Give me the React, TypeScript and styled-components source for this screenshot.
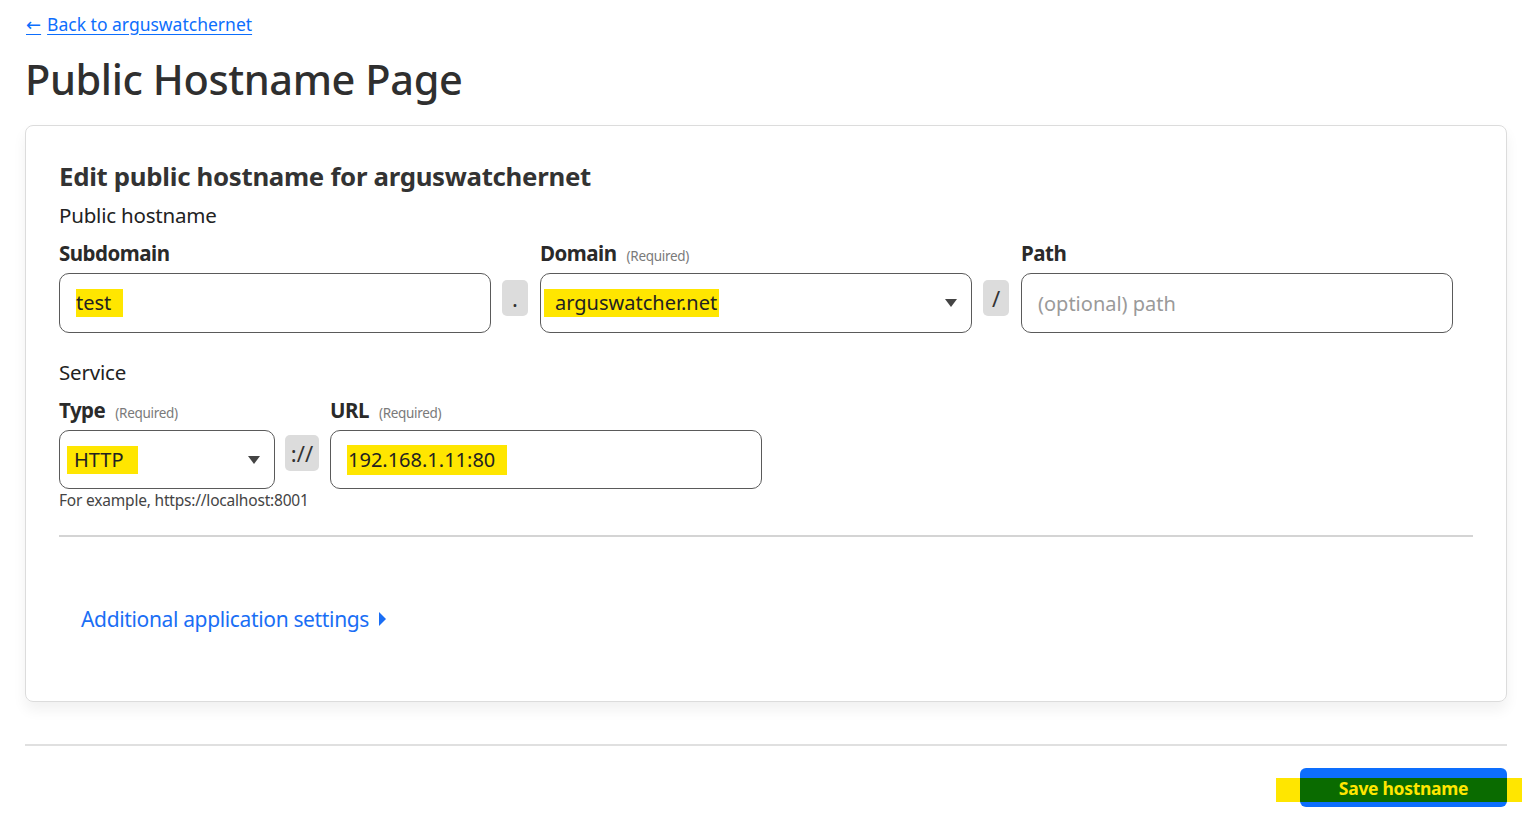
import styled, { createGlobalStyle } from "styled-components";

const GlobalStyle = createGlobalStyle`
  html, body {
    margin: 0;
    background: #ffffff;
  }

  body {
    font-family: "Noto Sans", "Open Sans", "Liberation Sans", sans-serif;
    color: #333333;
  }

  * {
    box-sizing: border-box;
  }
`;

const Page = styled.div`
  padding: 11px 16px 0 25px;
`;

const BackLink = styled.a`
  display: inline-block;
  margin-left: 1px;
  font-size: 17.5px;
  line-height: 26px;
  color: #0d6efd;
  text-decoration: underline;
  text-underline-offset: 3px;
  cursor: pointer;
`;

const Arrow = styled.span`
  font-family: "DejaVu Sans", sans-serif;
  font-size: 18px;
  margin-right: 6px;
`;

const Title = styled.h1`
  margin: 16px 0 21px 0;
  font-size: 41.5px;
  line-height: 50px;
  font-weight: 500;
  color: #2f2f2f;
  letter-spacing: -0.4px;
`;

const Card = styled.section`
  border: 1px solid #dcdcdc;
  border-radius: 8px;
  padding: 32px 33px 0 33px;
  height: 577px;
  box-shadow: 0 8px 14px rgba(0, 0, 0, 0.06);
`;

const CardTitle = styled.h2`
  margin: 0 0 7px 0;
  font-size: 25.8px;
  line-height: 36px;
  font-weight: 700;
  color: #333333;
  letter-spacing: -0.3px;
`;

const SectionLabel = styled.div`
  font-size: 20.5px;
  line-height: 28px;
  color: #222222;
  letter-spacing: -0.2px;
`;

const FieldRow = styled.div`
  display: flex;
  align-items: flex-start;
  margin-top: 10px;
`;

const Field = styled.div<{ $width: number }>`
  display: flex;
  flex-direction: column;
  width: ${(p) => p.$width}px;
`;

const LabelLine = styled.div`
  display: flex;
  align-items: baseline;
  height: 34px;
`;

const Label = styled.span`
  font-size: 20.5px;
  line-height: 28px;
  font-weight: 700;
  color: #2a2a2a;
  letter-spacing: -0.5px;
`;

const Required = styled.span`
  margin-left: 10px;
  font-size: 13.5px;
  color: #7a7a7a;
  letter-spacing: -0.3px;
`;

const InputBox = styled.div<{ $height?: number }>`
  position: relative;
  display: flex;
  align-items: center;
  height: ${(p) => p.$height ?? 60}px;
  border: 1px solid #5a5a5a;
  border-radius: 10px;
  padding: 0 16px;
  font-size: 20px;
  color: #222222;
  background: #ffffff;
`;

const Placeholder = styled.span`
  color: #9a9a9a;
`;

const Highlight = styled.span<{ $pad?: string }>`
  background: #ffe600;
  padding: ${(p) => p.$pad ?? "0 4px"};
  line-height: 28px;
`;

const Caret = styled.span`
  position: absolute;
  right: 14px;
  top: 50%;
  margin-top: -4px;
  width: 0;
  height: 0;
  border-left: 6px solid transparent;
  border-right: 6px solid transparent;
  border-top: 8px solid #444444;
`;

const Separator = styled.div<{ $width: number }>`
  display: flex;
  align-items: center;
  justify-content: center;
  width: ${(p) => p.$width}px;
  height: 36px;
  margin: 41px 12px 0 11px;
  border-radius: 5px;
  background: #dcdcdc;
  font-size: 22px;
  color: #333333;
`;

const Hint = styled.div`
  margin-top: 1px;
  font-size: 15.5px;
  line-height: 20px;
  color: #444444;
  white-space: nowrap;
  letter-spacing: -0.2px;
`;

const ServiceLabel = styled(SectionLabel)`
  margin-top: 25px;
`;

const Divider = styled.hr`
  margin: 25px 0 0 0;
  border: 0;
  border-top: 2px solid #d4d4d4;
`;

const Expander = styled.button`
  display: inline-flex;
  align-items: center;
  gap: 10px;
  margin: 68px 0 0 22px;
  padding: 0;
  border: 0;
  background: none;
  font-family: inherit;
  font-size: 21px;
  color: #1a6ef5;
  cursor: pointer;
  letter-spacing: -0.35px;
`;

const ExpanderCaret = styled.span`
  width: 0;
  height: 0;
  border-top: 7px solid transparent;
  border-bottom: 7px solid transparent;
  border-left: 7px solid #1a6ef5;
`;

const Footer = styled.div`
  margin-top: 42px;
  border-top: 2px solid #e0e0e0;
  display: flex;
  justify-content: flex-end;
  padding-top: 22px;
`;

const SaveWrap = styled.div`
  position: relative;
`;

const SaveBand = styled.span`
  position: absolute;
  left: -24px;
  right: -15px;
  top: 10px;
  height: 24px;
  background: #ffe600;
`;

const SaveButton = styled.button`
  position: relative;
  width: 207px;
  height: 39px;
  border: 0;
  border-radius: 6px;
  background: linear-gradient(
    #0d6efd 0,
    #0d6efd 10px,
    #0a6b00 10px,
    #0a6b00 34px,
    #0d6efd 34px
  );
  color: #ffe600;
  font-family: inherit;
  font-size: 17.5px;
  font-weight: 700;
  letter-spacing: -0.3px;
  cursor: pointer;
`;

export default function App() {
  return (
    <>
      <GlobalStyle />
      <Page>
        <BackLink>
          <Arrow>←</Arrow>Back to arguswatchernet
        </BackLink>
        <Title>Public Hostname Page</Title>
        <Card>
          <CardTitle>Edit public hostname for arguswatchernet</CardTitle>
          <SectionLabel>Public hostname</SectionLabel>
          <FieldRow>
            <Field $width={432}>
              <LabelLine>
                <Label>Subdomain</Label>
              </LabelLine>
              <InputBox>
                <Highlight $pad="0 12px 0 0">test</Highlight>
              </InputBox>
            </Field>
            <Separator $width={26}>.</Separator>
            <Field $width={432}>
              <LabelLine>
                <Label>Domain</Label>
                <Required>(Required)</Required>
              </LabelLine>
              <InputBox style={{ paddingLeft: 3 }}>
                <Highlight $pad="0 2px 0 11px">arguswatcher.net</Highlight>
                <Caret />
              </InputBox>
            </Field>
            <Separator $width={26}>/</Separator>
            <Field $width={432}>
              <LabelLine>
                <Label>Path</Label>
              </LabelLine>
              <InputBox>
                <Placeholder>(optional) path</Placeholder>
              </InputBox>
            </Field>
          </FieldRow>

          <ServiceLabel>Service</ServiceLabel>
          <FieldRow>
            <Field $width={216}>
              <LabelLine>
                <Label>Type</Label>
                <Required>(Required)</Required>
              </LabelLine>
              <InputBox $height={59} style={{ paddingLeft: 7 }}>
                <Highlight $pad="0 14px 0 7px">HTTP</Highlight>
                <Caret />
              </InputBox>
              <Hint>For example, https://localhost:8001</Hint>
            </Field>
            <Separator $width={34} style={{ marginTop: 39, marginLeft: 10, marginRight: 11 }}>
              ://
            </Separator>
            <Field $width={432}>
              <LabelLine>
                <Label>URL</Label>
                <Required>(Required)</Required>
              </LabelLine>
              <InputBox $height={59}>
                <Highlight $pad="1px 12px 1px 1px">192.168.1.11:80</Highlight>
              </InputBox>
            </Field>
          </FieldRow>

          <Divider />
          <Expander>
            Additional application settings
            <ExpanderCaret />
          </Expander>
        </Card>
        <Footer>
          <SaveWrap>
            <SaveBand />
            <SaveButton>Save hostname</SaveButton>
          </SaveWrap>
        </Footer>
      </Page>
    </>
  );
}
